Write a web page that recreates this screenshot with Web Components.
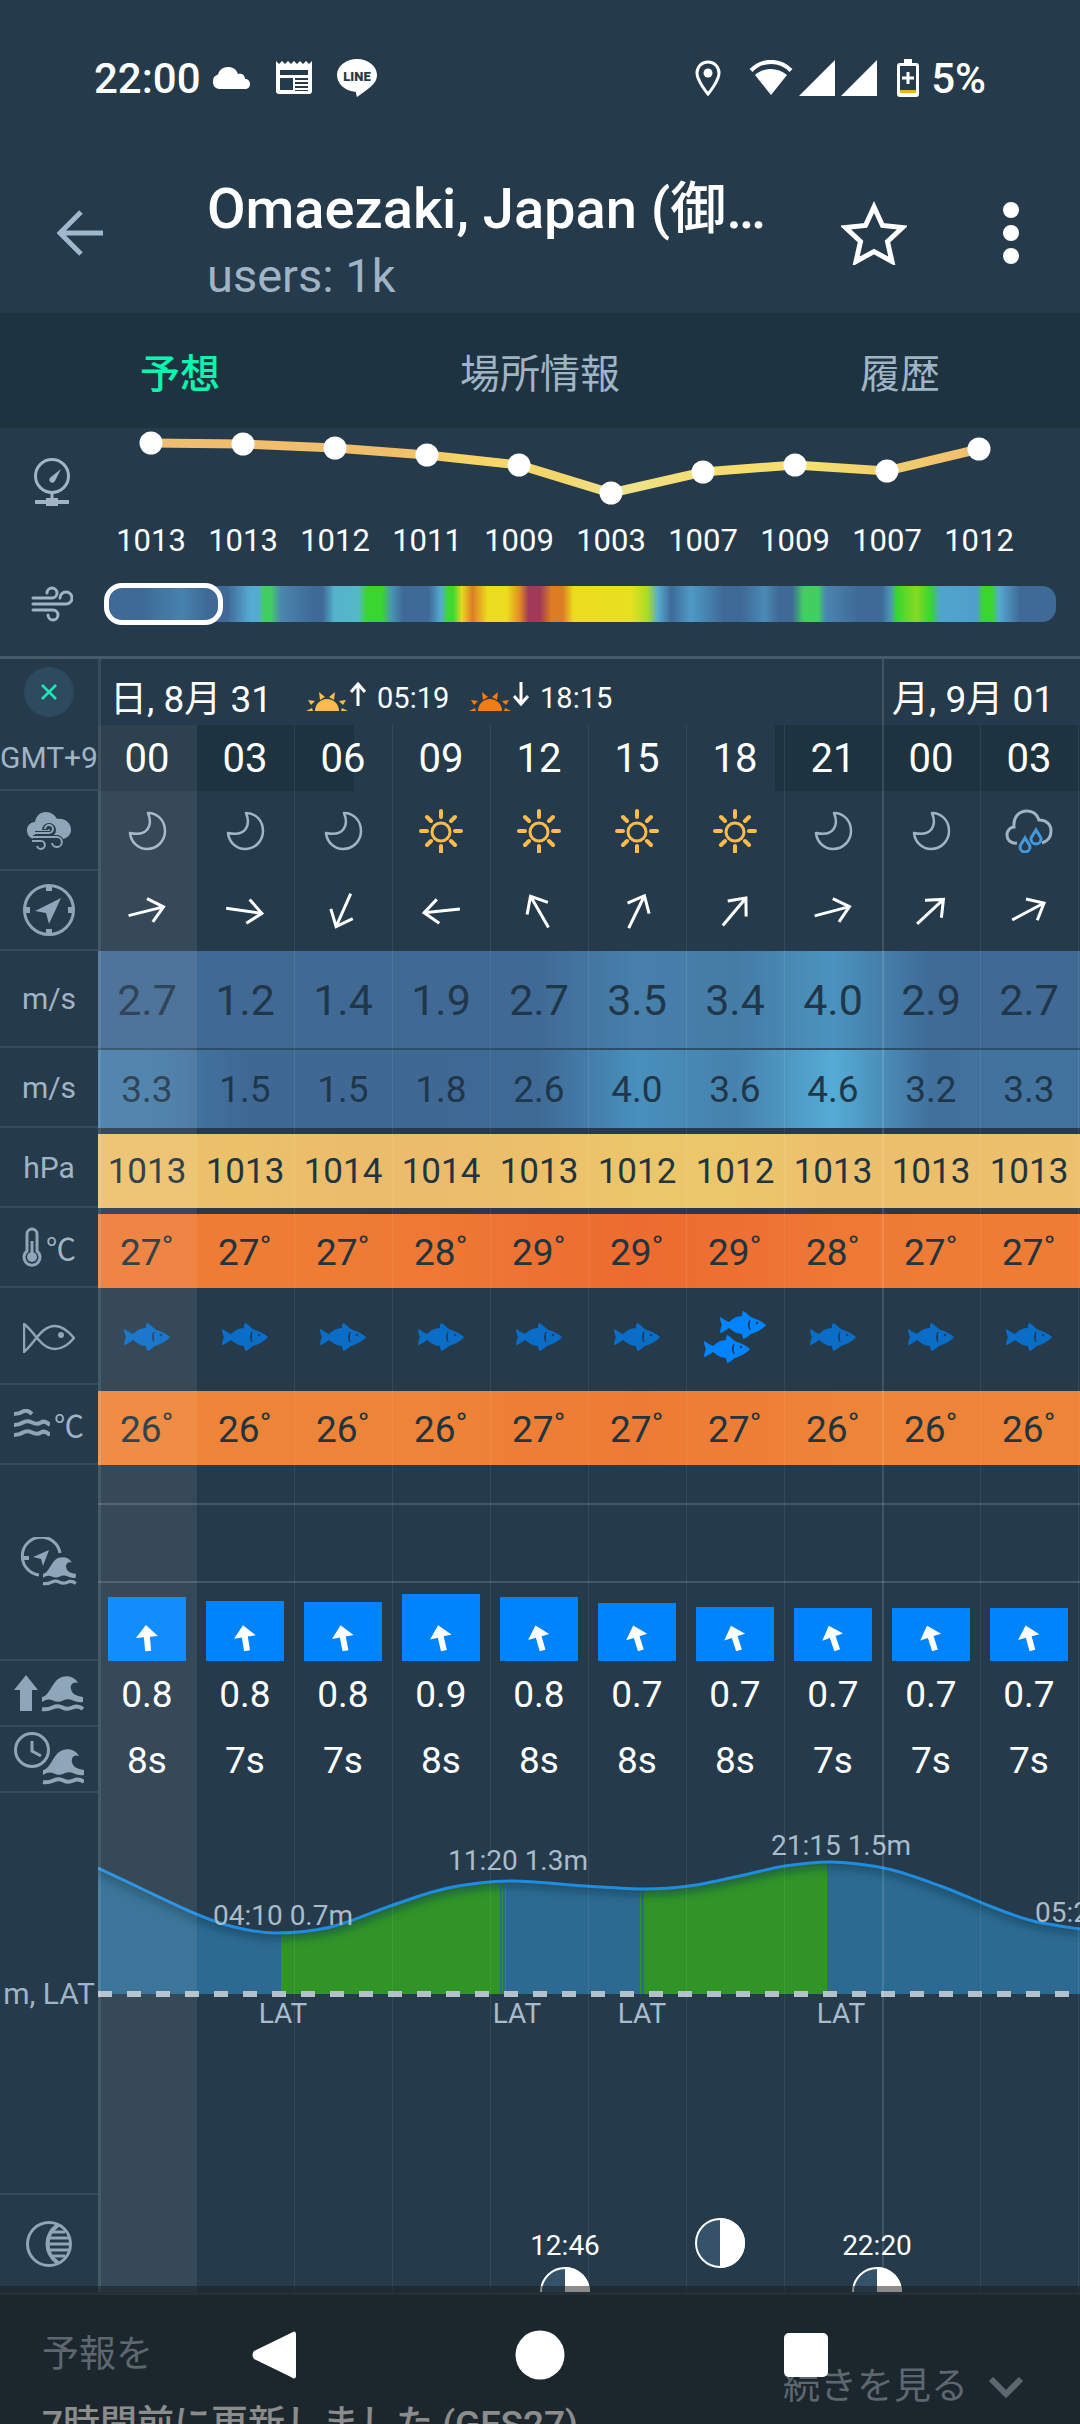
<!DOCTYPE html>
<html lang="ja">
<head>
<meta charset="utf-8">
<meta name="viewport" content="width=device-width, initial-scale=1">
<title>Omaezaki, Japan</title>
<style>
:root {
  --bg: #253b4b;
  --bg-dark: #1d3340;
  --line: #344b5b;
  --muted: #a0b4c6;
  --accent: #0cf5b0;
  --ink: #20374a;
}
html, body { margin: 0; background: var(--bg); }
body { color: #fff; font-family: Roboto, "Noto Sans CJK JP", sans-serif; }
</style>
</head>
<body>
<forecast-app></forecast-app>
<script>
const WAVE = 'M0 21c8-1 10-17 20-20 6-2 13 0 16 6-5-2-8 2-7 6 1 5 5 7 12 8v5q-5 1-10-1.500t-10 0-10 0-11 1.500z';
const WAVELINE = 'M0 33q5 1 10.500-1.500t10 0 10 0 10.500 1.500';
const FISH = 'M0 6c1 0 6 4 9 5 4-4 8-6 13-6C22 3 22 1 23 0c5 2 5 5 10 7 6 2 10 4 13 7-3 4-9 7-15 9-2 1-4 4-8 5 0-2-1-3-1-5-5 0-9-3-13-6-3 2-7 5-9 5 0-3 1-6 2-8C1 12 0 9 0 6z';
const FISHCUT = '<path d="M30 9c-2 3-2 7 0 10-1-3-1-7 0-10z" fill="#1c3d5e" stroke="#1c3d5e"/><circle cx="37" cy="12" r="1.200" fill="#1c3d5e"/>';
const half = (cx, cy) => `<circle cx="${cx}" cy="${cy}" r="24" fill="#34536b" stroke="#fff" stroke-width="2"/><path d="M${cx} ${cy - 25}a25 25 0 0 1 0 50z" fill="#fff"/>`;
const sunrise = c => `<g fill="${c}"><path d="M9 20a12 12 0 0 1 24 0z"/><path d="M0 20l6-3 1 3zM42 20l-6-3-1 3zM2 9l7 1-4 4zM40 9l-7 1 4 4zM13 1l6 5-5 3zM29 1l-6 5 5 3z"/></g>`;

/* name: [width, height, markup] */
const ICONS = {
  back: [48, 46, '<path d="M46 23H4M24 2L3 23l21 21" fill="none" stroke="#a0b8cc" stroke-width="5"/>'],
  star: [66, 64, '<path d="M33 6l8.500 18.500 20 2-15 14 4.500 20L33 50.500 15 60.500l4.500-20-15-14 20-2z" fill="none" stroke="#fff" stroke-width="5"/>'],
  dots: [16, 62, '<g fill="#fff"><circle cx="8" cy="8" r="8"/><circle cx="8" cy="31" r="8"/><circle cx="8" cy="54" r="8"/></g>'],
  cloud: [40, 23, '<path d="M8 22a7.500 7.500 0 0 1-1-14.500C8 3 12 0 17 0c5 0 8 2 10 7 5-1 7 2 7 5 3 0 5 2 5 5s-2 5-5 5z" fill="#fff"/>'],
  news: [38, 34, '<path fill="#fff" fill-rule="evenodd" d="M1 0l3 3 3-3 3 3 3-3 3 3 3-3 3 3 3-3 3 3 3-3 3 3 3-3v30q0 3-3 3H4q-3 0-3-3zM5 9v5h28V9zM5 17v12h13V17zM20 17v2h13v-2zM20 21v2h13v-2zM20 25v2h13v-2zM20 29v1h13v-1z"/>'],
  line: [40, 39, '<path d="M20 0c11 0 20 7 20 16 0 8-6 12-20 22 0 0-1-3-1-5C8 32 0 25 0 16 0 7 9 0 20 0z" fill="#fff"/><text x="20" y="22" text-anchor="middle" font-family="Roboto, sans-serif" font-size="13" font-weight="900" fill="#253b4b">LINE</text>'],
  pin: [26, 37, '<path d="M13 2C6.500 2 2 7 2 13c0 8 11 21 11 21s11-13 11-21C24 7 19.500 2 13 2z" fill="none" stroke="#fff" stroke-width="3"/><circle cx="13" cy="13" r="4.500" fill="#fff"/>'],
  wifi: [44, 36, '<path d="M2 10.500C13-1 31-1 42 10.500" fill="none" stroke="#fff" stroke-width="4"/><path d="M22 35L6 15c9-8 23-8 32 0z" fill="#fff"/>'],
  signal: [36, 36, '<path d="M36 0v36H0z" fill="#fff"/>'],
  battery: [22, 38, '<path d="M7 0h8v4h4q3 0 3 3v28q0 3-3 3H3q-3 0-3-3V7q0-3 3-3h4z" fill="#fff"/><path d="M3 7h16v24H3z" fill="#253b4b"/><path d="M3 31h16v3H3z" fill="#e6b422"/><path d="M11 13v12M5 19h12" stroke="#fff" stroke-width="3"/>'],
  barometer: [38, 50, '<g fill="none" stroke="#a0b4c6"><circle cx="19" cy="18" r="16.500" stroke-width="3"/><path d="M19 34v8" stroke-width="3"/><path d="M2 44h34" stroke-width="4"/></g><path d="M13 40h12v8H13z" fill="#a0b4c6"/><path d="M28 11l-10 8a3 3 0 1 0 4 4z" fill="#a0b4c6"/>'],
  wind: [42, 36, '<g fill="none" stroke="#a0b4c6" stroke-width="3" stroke-linecap="round"><path d="M2 12h19a5 5 0 1 0-5-5M2 18h33a6 6 0 1 0-6-6M2 24h20a5 5 0 1 1-5 5"/></g>'],
  close: [16, 16, '<path d="M1 1l14 14M15 1L1 15" stroke="#1de9b6" stroke-width="2.500"/>'],
  sunrise: [42, 20, sunrise('#fbbc4d')],
  sunset: [42, 20, sunrise('#f57c10')],
  up: [16, 24, '<path d="M8 24V3M1 10l7-8 7 8" fill="none" stroke="#fff" stroke-width="3"/>'],
  down: [16, 24, '<path d="M8 0v21M1 14l7 8 7-8" fill="none" stroke="#fff" stroke-width="3"/>'],
  moon: [40, 40, '<path d="M21 2c5 12 0 24-18 20 1 9 8 16 17 16 10 0 18-8 18-18C38 10 31 2 21 2z" fill="none" stroke="#a0b4c6" stroke-width="2.500" stroke-linejoin="round"/>'],
  sun: [44, 44, '<g fill="none" stroke="#fbbc4d" stroke-linecap="round"><circle cx="22" cy="23" r="9" stroke-width="3"/><path d="M22 2v6M22 37v6M2 22h6M36 22h6M8 8l4 4M32 32l4 4M36 8l-4 4M12 32l-4 4" stroke-width="4"/></g>'],
  rain: [48, 44, '<path d="M12 34C5 35 2 30 2 26s3-8 7-8C8 8 14 2 22 2c6 0 10 3 12 9 7 0 12 4 12 11 0 6-3 10-9 12" fill="none" stroke="#a0b4c6" stroke-width="3"/><path d="M20 29c-3 5-5 7-5 9a5 5 0 0 0 10 0c0-2-2-4-5-9zM31 21c-3 5-5 7-5 9a5 5 0 0 0 10 0c0-2-2-4-5-9z" fill="none" stroke="#4499dd" stroke-width="3"/>'],
  windcloud: [44, 38, '<path d="M7 27C2 26 0 22 0 18c0-5 4-8 8-8C9 4 13 0 19 0c5 0 9 3 11 7 8-1 14 4 14 11 0 4-3 8-8 9z" fill="#8fa5b8"/><g fill="none" stroke="#253b4b" stroke-width="6"><path d="M8 22h14a4 4 0 1 0-4-4M6 26h24a4 4 0 1 1-4 5"/></g><g fill="none" stroke="#8fa5b8" stroke-width="2"><path d="M8 21h14a4 4 0 1 0-4-4M6 25h24a5 5 0 1 1-5 6M5 29h8a4 4 0 1 1-3 5"/></g>'],
  compass: [52, 52, '<circle cx="26" cy="26" r="24.500" fill="none" stroke="#8fa5b8" stroke-width="3"/><path d="M26 2v5M26 45v5M2 26h5M45 26h5" stroke="#8fa5b8" stroke-width="6"/><path d="M38 14L12 27l11 2 3 11z" fill="#8fa5b8"/>'],
  arrow: [42, 42, '<path d="M2 21h36M24 9l14 12-14 12" fill="none" stroke="#fff" stroke-width="3"/>'],
  thermo: [20, 40, '<path d="M5 24V7a5 5 0 0 1 10 0v17a8 8 0 1 1-10 0z" fill="none" stroke="#8fa5b8" stroke-width="3"/><circle cx="10" cy="30" r="5" fill="#8fa5b8"/><path d="M10 30V14" stroke="#8fa5b8" stroke-width="3"/>'],
  fishline: [52, 30, '<path d="M1 1v28C12 20 18 3 32 3c8 0 14 6 19 12-5 6-11 11-19 11C18 26 12 9 1 1z" fill="none" stroke="#8fa5b8" stroke-width="2.500"/><circle cx="38" cy="12" r="3" fill="#8fa5b8"/>'],
  fish: [46, 28, `<g opacity=".7"><path d="${FISH}" fill="#0084ff"/>${FISHCUT}</g>`],
  fishes: [62, 52, `<g transform="translate(16 0)"><path d="${FISH}" fill="#0084ff"/>${FISHCUT}</g><g transform="translate(0 24)"><path d="${FISH}" fill="#0084ff"/>${FISHCUT}</g>`],
  water: [36, 30, '<path d="M0 5q5 0 9-2.500t9 2.500M0 16q5 0 9-2.500t9 0 9 0 9 2.500M0 26q5 0 9-2.500t9 0 9 0 9 2.500" fill="none" stroke="#8fa5b8" stroke-width="4"/>'],
  swell: [56, 50, `<path d="M18 38A19 19 0 1 1 39 16" fill="none" stroke="#8fa5b8" stroke-width="3"/><path d="M2 21h6" stroke="#8fa5b8" stroke-width="4"/><path d="M28 13L12 20l8 2 2 7z" fill="#8fa5b8"/><g transform="translate(22 20) scale(.8)"><path d="${WAVE}" fill="#8fa5b8"/><path d="${WAVELINE}" fill="none" stroke="#8fa5b8" stroke-width="4"/></g>`],
  waveup: [70, 38, `<path d="M12 0l12 15h-6v21H6V15H0z" fill="#8fa5b8"/><g transform="translate(28 1)"><path d="${WAVE}" fill="#8fa5b8"/><path d="${WAVELINE}" fill="none" stroke="#8fa5b8" stroke-width="4"/></g>`],
  wavetime: [70, 54, `<circle cx="18" cy="18" r="16.500" fill="none" stroke="#8fa5b8" stroke-width="3"/><path d="M18 9v10l9 5" fill="none" stroke="#8fa5b8" stroke-width="3"/><g transform="translate(29 17)"><path d="${WAVE}" fill="#8fa5b8"/><path d="${WAVELINE}" fill="none" stroke="#8fa5b8" stroke-width="4"/></g>`],
  swellarrow: [26, 28, '<path d="M13 1l11 12h-8v14h-6V13H2z" fill="#fff"/>'],
  phase: [48, 48, '<circle cx="24" cy="24" r="21.500" fill="none" stroke="#8fa5b8" stroke-width="3"/><path d="M33 5c-14 10-14 28 0 38" fill="none" stroke="#8fa5b8" stroke-width="4"/><path d="M28 12h12M25 18h19M24 24h22M25 30h19M28 36h12" stroke="#8fa5b8" stroke-width="3"/>'],
  chevron: [36, 24, '<path d="M3 4l15 15L33 4" fill="none" stroke="#a0b4c6" stroke-width="6"/>'],
  navback: [46, 50, '<path d="M43 1.500q2 0 2 3v41q0 3-2 3-1 0-3-1.500L3 29q-3-4 0-8L40 3q2-1.500 3-1.500z" fill="#fff"/>'],
  navhome: [50, 50, '<circle cx="25" cy="25" r="24.500" fill="#fff"/>'],
  navrecent: [46, 46, '<rect x="1" y="1" width="44" height="44" rx="5" fill="#fff"/>']
};

function define(name, css, html, ready) {
  const template = document.createElement('template');
  template.innerHTML = `<style>*{box-sizing:border-box}button{font:inherit;color:inherit;background:none;border:0;padding:0;cursor:pointer;display:flex;align-items:center;justify-content:center}${css}</style>${html}`;
  customElements.define(name, class extends HTMLElement {
    connectedCallback() {
      if (this.shadowRoot) return;
      const root = this.attachShadow({ mode: 'open' });
      root.append(template.content.cloneNode(true));
      if (ready) ready(this, root);
    }
  });
}

define('wx-icon', ':host{display:inline-flex;flex:none;vertical-align:middle}span,svg{display:block}', '<span></span>', (el, root) => {
  const [w, h, body] = ICONS[el.getAttribute('name')];
  const turn = el.getAttribute('turn') || 0;
  root.querySelector('span').innerHTML =
    `<svg aria-hidden="true" width="${w}" height="${h}" viewBox="0 0 ${w} ${h}"><g transform="rotate(${turn} ${w / 2} ${h / 2})">${body}</g></svg>`;
});

define('status-bar', `
  :host{display:flex;justify-content:space-between;align-items:center;height:156px;padding:0 94px;font-size:42px;font-weight:500}
  div{display:flex;align-items:center}
  .l{gap:24px}.l span{margin-right:-14px}
  .r{gap:6px}.r .pin{margin-right:22px}.r .bat{margin:0 6px 0 14px}`,
  `<div class="l"><span>22:00</span><wx-icon name="cloud"></wx-icon><wx-icon name="news"></wx-icon><wx-icon name="line"></wx-icon></div>
   <div class="r"><wx-icon class="pin" name="pin"></wx-icon><wx-icon name="wifi"></wx-icon><wx-icon name="signal"></wx-icon><wx-icon name="signal"></wx-icon><wx-icon class="bat" name="battery"></wx-icon><span>5%</span></div>`);

define('app-bar', `
  :host{display:flex;align-items:center;height:157px;padding:0 48px 4px 57px}
  .t{flex:1;min-width:0;padding:18px 0 0 102px;white-space:nowrap}
  h1{margin:0;font-size:56px;line-height:68px;font-weight:500}
  p{margin:0;font-size:47px;line-height:66px;color:var(--muted)}
  button{width:80px;height:80px;flex:none}
  .b{width:48px}.m{width:42px;margin-left:76px}`,
  `<button class="b" aria-label="戻る"><wx-icon name="back"></wx-icon></button>
   <div class="t"><h1><slot name="title"></slot></h1><p><slot name="sub"></slot></p></div>
   <button aria-label="お気に入り"><wx-icon name="star"></wx-icon></button>
   <button class="m" aria-label="メニュー"><wx-icon name="dots"></wx-icon></button>`);

define('tab-bar', `
  :host{display:block;background:var(--bg-dark)}
  nav{display:grid;grid-template-columns:repeat(3,1fr)}
  button{height:115px;font-size:40px;color:var(--muted)}
  .on{color:var(--accent);font-weight:500}`,
  `<nav><button class="on" aria-current="page">予想</button><button>場所情報</button><button>履歴</button></nav>`);

define('pressure-chart', `
  :host{display:grid;grid-template-columns:104px 1fr;align-items:center}
  wx-icon{justify-self:center;margin-top:-28px}svg{display:block;width:100%}`,
  `<wx-icon name="barometer"></wx-icon><svg viewBox="0 0 976 138" role="img" aria-label="hPa"></svg>`,
  (el, root) => {
    const v = [1013, 1013, 1012, 1011, 1009, 1003, 1007, 1009, 1007, 1012];
    const y = [15, 16, 20, 27, 37, 65, 44, 37, 43, 21];
    const x = i => 47 + 92 * i;
    root.querySelector('svg').innerHTML =
      `<defs><linearGradient id="p" gradientUnits="userSpaceOnUse" x1="47" y1="0" x2="875" y2="0">
        <stop offset="0" stop-color="#f0bd70"/><stop offset=".3" stop-color="#f0bf6a"/><stop offset=".38" stop-color="#f6d566"/><stop offset=".5" stop-color="#f3d76c"/><stop offset=".56" stop-color="#eee38f"/><stop offset=".68" stop-color="#f5dc6c"/><stop offset=".8" stop-color="#f5e06e"/><stop offset=".88" stop-color="#f2d06c"/><stop offset="1" stop-color="#f0bd70"/></linearGradient></defs>
      <polyline fill="none" stroke="url(#p)" stroke-width="9" points="${y.map((b, i) => x(i) + ',' + b).join(' ')}"/>` +
      v.map((n, i) => `<circle cx="${x(i)}" cy="${y[i]}" r="11.500" fill="#fff"/><text x="${x(i)}" y="123" text-anchor="middle" font-size="31" fill="#fff">${n}</text>`).join('');
  });

define('wind-strip', `
  :host{display:grid;grid-template-columns:104px 1fr;align-items:center;height:90px;padding:0 24px 14px 0}
  wx-icon{justify-self:center}
  .s{height:36px;border-radius:14px;display:flex;align-items:center;background:linear-gradient(90deg,#3f6a97 0,#3f6a97 4%,#4682ac 8.2%,#3f6a97 10.8%,#3f6a97 13%,#54aad2 15.3%,#54aad2 16.2%,#42cf62 16.8%,#42cf62 17.5%,#4a86b0 18.6%,#3f6a97 22%,#3f6a97 23%,#54b4cd 24.2%,#54b8c8 26.7%,#3ad62f 27.6%,#3ad62f 29.2%,#4a95b5 30.2%,#3f6a97 31.4%,#3f6a97 34.1%,#54aad2 35.4%,#40d830 36.1%,#40d830 36.7%,#e8d820 37.6%,#dc7d24 38.7%,#ecdc1e 40.3%,#ecdc1e 42.3%,#e08a22 43.7%,#a03a58 44.6%,#a03a58 45.8%,#dc7d24 47%,#dc7d24 48.2%,#ecdc1e 49.3%,#e8e020 55.3%,#a8dc25 57.1%,#54aad2 58.2%,#3f6a97 59.6%,#4d9ac6 61.6%,#3f6a97 65%,#3f6a97 67%,#4a8bb5 69.4%,#3f6a97 70.8%,#3f6a97 72.3%,#42cf62 73.5%,#42cf62 75%,#4a86b0 75.8%,#3f6a97 79.2%,#3f6a97 81.7%,#4a95b5 82.6%,#3ad62f 83.3%,#86da22 85.3%,#3ad62f 86.8%,#4fa5cc 87.8%,#4f9fcc 91.7%,#3ad62f 92.3%,#3ad62f 93.3%,#54aad2 94%,#3f6a97 96.2%)}
  .w{height:42px;width:119px;border:5px solid #fff;border-radius:18px}`,
  `<wx-icon name="wind"></wx-icon><div class="s"><div class="w"></div></div>`);

const cells = (list, fn = v => v, cls = '') => list.map((v, i) => `<td class="${cls}">${fn(v, i)}</td>`).join('') + '<td></td>';
/* colour ramp with one stop at the middle of each forecast column */
const ramp = list => `linear-gradient(90deg,${list.map((c, i) => `${c} ${(147 + 98 * i) / 10.8}%`).join(',')})`;
const gapTop = 'linear-gradient(var(--bg) 6px,transparent 6px),';

const tidePts = [[0, 75], [40, 94], [98, 121], [136, 134], [177, 140], [233, 134], [295, 112], [350, 95], [412, 88], [487, 93], [546, 96], [591, 93], [646, 82], [687, 73], [734, 69], [790, 76], [845, 94], [894, 114], [935, 128], [982, 136]];
function smooth(p) {
  let d = `M${p[0]}`;
  for (let i = 0; i < p.length - 1; i++) {
    const a = p[i - 1] || p[i], b = p[i], c = p[i + 1], e = p[i + 2] || c;
    d += `C${b[0] + (c[0] - a[0]) / 6} ${b[1] + (c[1] - a[1]) / 6} ${c[0] - (e[0] - b[0]) / 6} ${c[1] - (e[1] - b[1]) / 6} ${c[0]} ${c[1]}`;
  }
  return d;
}
const curve = smooth(tidePts);
const tide = `<svg viewBox="0 0 982 402" role="img" aria-label="tide">
  <defs><clipPath id="sea"><path d="${curve}V201H0z"/></clipPath>
  <filter id="soft" x="-5%" y="-50%" width="110%" height="200%"><feGaussianBlur stdDeviation="4"/></filter></defs>
  <g clip-path="url(#sea)"><path d="M0 0h982v201H0z" fill="#2d6a91"/>
  <path d="M183 0h219v201H183zM404 0h1v201h-1zM407 0h1v201h-1zM542 0h1v201h-1zM546 0h183v201H546z" fill="#309427"/>
  <path d="${curve}" fill="none" stroke="#123a50" stroke-opacity=".6" stroke-width="12" filter="url(#soft)"/></g>
  <path d="${curve}" fill="none" stroke="#1f8ce0" stroke-width="3"/>
  <path d="M0 201H982" stroke="#b3c1ca" stroke-width="6" stroke-dasharray="14 15"/>
  <g fill="#a9bccb" font-size="28" text-anchor="middle"><text x="185" y="132">04:10 0.7m</text><text x="420" y="77">11:20 1.3m</text><text x="743" y="62">21:15 1.5m</text><text x="937" y="129" text-anchor="start">05:20 0.7m</text>
  <text x="185" y="230">LAT</text><text x="419" y="230">LAT</text><text x="544" y="230">LAT</text><text x="743" y="230">LAT</text></g></svg>`;
const moons = `<svg viewBox="0 0 982 97" role="img" aria-label="moon">${half(467, 97)}${half(622, 48)}${half(779, 97)}
  <g fill="#fff" font-size="28" text-anchor="middle"><text x="467" y="60">12:46</text><text x="779" y="60">22:20</text></g></svg>`;

define('forecast-table', `
  :host{display:block;position:relative;border-top:3px solid #455c6b}
  table{width:100%;border-collapse:separate;border-spacing:0;table-layout:fixed}
  th,td{padding:0;text-align:center;vertical-align:middle;font-weight:400}
  th:first-child{background:var(--bg);color:var(--muted);font-size:30px;border-bottom:2px solid var(--line);white-space:nowrap}
  .first{width:98px}.last{width:2px}
  tr{height:66px}
  .day th:first-child{border:0}
  .day td{text-align:left;font-size:37px;padding:8px 0 0 12px;white-space:nowrap}
  .day td+td{padding-left:10px}
  .day div{display:flex;align-items:center}
  .day small{font-size:29px;padding:4px 0 0 11px;width:103px}
  .day .ic{display:flex;align-items:flex-start}
  .day .ic wx-icon:first-child{margin-top:9px}
  .day .ic wx-icon:last-child{margin-left:2px}
  .date{margin-right:34px}
  button{width:50px;height:50px;border-radius:50%;background:#2d4a5f;margin:auto}
  .hour{background:linear-gradient(90deg,var(--bg-dark) 32.8%,transparent 32.8%,transparent 71.8%,var(--bg-dark) 71.8%)}
  .hour td{font-size:40px}
  .r80{height:80px}.r97{height:97px}
  .v{color:var(--ink)}
  .big{font-size:43px}.mid{font-size:37px}.hpa{font-size:35px;padding-top:6px}.deg{font-size:37px;padding-top:8px}
  .hpa,.deg{color:#22343e}
  .u{display:flex;align-items:center;justify-content:center;gap:4px}
  .val td{font-size:37px}
  .gust td{border-top:2px solid #2c4e66}
  .swell{height:196px;background:linear-gradient(transparent 38px,#425866 38px,#425866 40px,transparent 40px,transparent 116px,#425866 116px,#425866 118px,transparent 118px)}
  .swell td{vertical-align:bottom}
  .bar{background:#0084fc;margin:0 10px;display:flex;align-items:flex-end;justify-content:center;padding-bottom:9px}
  .wide svg{display:block;width:100%}
  .wide{overflow:hidden}
  .grid{position:absolute;inset:0 0 0 98px;display:grid;grid-template-columns:repeat(10,98fr) 2fr;pointer-events:none}
  .grid i{margin-top:66px;border-left:1px solid rgba(255,255,255,.07)}
  .grid i:first-child{background:rgba(255,255,255,.075);border:0}
  .grid i.new{margin-top:0;border-left:2px solid rgba(255,255,255,.13)}
  .edge{position:absolute;inset:0 auto 0 98px;width:3px;background:rgba(255,255,255,.09);pointer-events:none}`,
  `<table><colgroup><col class="first"><col span="10"><col class="last"></colgroup><tbody>
  <tr class="day"><th><button aria-label="閉じる"><wx-icon name="close"></wx-icon></button></th>
    <td colspan="8"><div><span class="date">日, 8月 31</span><span class="ic"><wx-icon name="sunrise"></wx-icon><wx-icon name="up"></wx-icon></span><small>05:19</small><span class="ic"><wx-icon name="sunset"></wx-icon><wx-icon name="down"></wx-icon></span><small>18:15</small></div></td>
    <td colspan="3">月, 9月 01</td></tr>
  <tr class="hour"><th scope="row">GMT+9</th>${cells(['00', '03', '06', '09', '12', '15', '18', '21', '00', '03'])}</tr>
  <tr class="r80"><th><wx-icon name="windcloud"></wx-icon></th>${cells(['moon', 'moon', 'moon', 'sun', 'sun', 'sun', 'sun', 'moon', 'moon', 'rain'], n => `<wx-icon name="${n}"></wx-icon>`)}</tr>
  <tr class="r80"><th><wx-icon name="compass"></wx-icon></th>${cells([-14, 8, 114, 174, -120, -64, -50, -15, -43, -28], a => `<wx-icon name="arrow" turn="${a}"></wx-icon>`)}</tr>
  <tr class="r97" style="background:${ramp(['#406994', '#406994', '#406994', '#406994', '#406a96', '#4680ab', '#457ca6', '#4a93be', '#3f6b97', '#406994'])}"><th scope="row">m/s</th>${cells(['2.7', '1.2', '1.4', '1.9', '2.7', '3.5', '3.4', '4.0', '2.9', '2.7'], v => v, 'v big')}</tr>
  <tr class="r80 gust" style="background:${ramp(['#457da8', '#3f6895', '#3f6895', '#3f6895', '#3f6a96', '#4890bd', '#4682ad', '#54acd6', '#41709c', '#42739e'])}"><th scope="row">m/s</th>${cells(['3.3', '1.5', '1.5', '1.8', '2.6', '4.0', '3.6', '4.6', '3.2', '3.3'], v => v, 'v mid')}</tr>
  <tr class="r80" style="background:${gapTop}${ramp(['#edc06c', '#ecc16a', '#ebbc6c', '#ebbc6c', '#ecc06a', '#ecc66b', '#ecc66b', '#ecc06c', '#ecbf6c', '#ecc06c'])}"><th scope="row">hPa</th>${cells([1013, 1013, 1014, 1014, 1013, 1012, 1012, 1013, 1013, 1013], v => v, 'v hpa')}</tr>
  <tr class="r80" style="background:${gapTop}${ramp(['#ee7c35', '#ee7c35', '#ee7c35', '#ee7834', '#ed7232', '#ed6b30', '#ed7032', '#ee7834', '#ee7c35', '#ee7c35'])}"><th scope="row"><span class="u"><wx-icon name="thermo"></wx-icon>℃</span></th>${cells([27, 27, 27, 28, 29, 29, 29, 28, 27, 27], v => v + '˚', 'v deg')}</tr>
  <tr class="r97"><th><wx-icon name="fishline"></wx-icon></th>${cells([1, 1, 1, 1, 1, 1, 2, 1, 1, 1], n => `<wx-icon name="${n > 1 ? 'fishes' : 'fish'}"></wx-icon>`)}</tr>
  <tr class="r80" style="background:${gapTop}${ramp(['#ee8437', '#ee8437', '#ee8437', '#ee8437', '#ee7e35', '#ee7b35', '#ee7e35', '#ee8437', '#ee8437', '#ee8437'])}"><th scope="row"><span class="u"><wx-icon name="water"></wx-icon>℃</span></th>${cells([26, 26, 26, 26, 27, 27, 27, 26, 26, 26], v => v + '˚', 'v deg')}</tr>
  <tr class="swell"><th><wx-icon name="swell"></wx-icon></th>${cells([[64, -5], [60, -9], [59, -11], [67, -13], [64, -16], [58, -17], [54, -18], [53, -19], [53, -18], [53, -15]], ([h, a]) => `<div class="bar" style="height:${h}px"><wx-icon name="swellarrow" turn="${a}"></wx-icon></div>`)}</tr>
  <tr class="val"><th><wx-icon name="waveup"></wx-icon></th>${cells(['0.8', '0.8', '0.8', '0.9', '0.8', '0.7', '0.7', '0.7', '0.7', '0.7'])}</tr>
  <tr class="val"><th><wx-icon name="wavetime"></wx-icon></th>${cells(['8s', '7s', '7s', '8s', '8s', '8s', '8s', '7s', '7s', '7s'])}</tr>
  <tr><th scope="row">m, LAT</th><td class="wide" colspan="11">${tide}</td></tr>
  <tr><th style="border:0"><wx-icon name="phase"></wx-icon></th><td class="wide" colspan="11">${moons}</td></tr>
  </tbody></table>
  <div class="edge"></div><div class="grid"><i></i><i></i><i></i><i></i><i></i><i></i><i></i><i></i><i class="new"></i><i></i><i></i></div>`);

define('update-footer', `
  :host{display:block;background:#1f3340;border-top:3px solid #2f4553;padding:34px 42px 0}
  .row{display:flex;justify-content:space-between;color:var(--muted);font-size:37px;line-height:52px}
  button{gap:20px;margin:32px 14px 0 0;line-height:52px}
  p{margin:-16px 0 0;font-size:37px;line-height:56px;font-weight:500}`,
  `<div class="row"><span>予報を</span><button>続きを見る<wx-icon name="chevron"></wx-icon></button></div><p>7時間前に更新しました (GFS27)</p>`);

define('nav-bar', `
  :host{position:fixed;inset:auto 0 0 0;height:138px;background:rgba(26,26,26,.5);display:flex;justify-content:center;align-items:center;gap:186px}
  button{width:80px;height:80px}`,
  `<button aria-label="戻る"><wx-icon name="navback"></wx-icon></button><button aria-label="ホーム"><wx-icon name="navhome"></wx-icon></button><button aria-label="履歴"><wx-icon name="navrecent"></wx-icon></button>`);

define('forecast-app', ':host{display:block;height:100vh;overflow:hidden}',
  `<status-bar></status-bar>
   <app-bar><span slot="title">Omaezaki, Japan (御…</span><span slot="sub">users: 1k</span></app-bar>
   <tab-bar></tab-bar>
   <pressure-chart></pressure-chart>
   <wind-strip></wind-strip>
   <forecast-table></forecast-table>
   <update-footer></update-footer>
   <nav-bar></nav-bar>`);
</script>
</body>
</html>
